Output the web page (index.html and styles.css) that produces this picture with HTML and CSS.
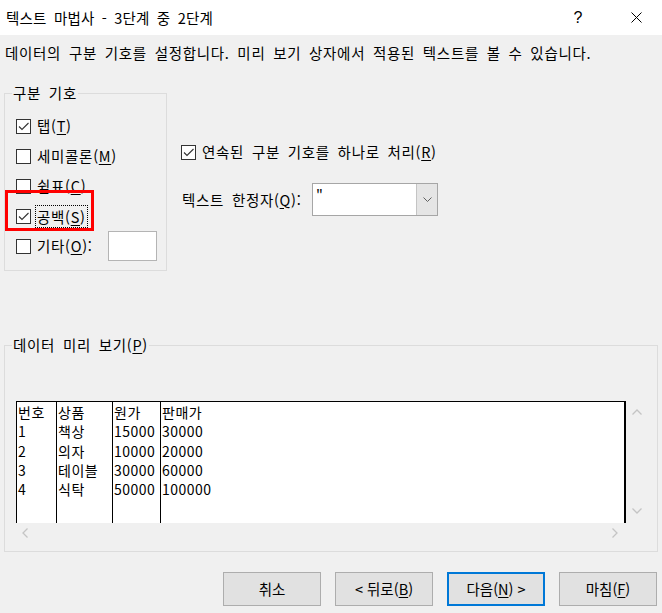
FILE: index.html
```html
<!DOCTYPE html>
<html lang="ko">
<head>
<meta charset="utf-8">
<title>텍스트 마법사 - 3단계 중 2단계</title>
<link rel="stylesheet" href="styles.css">
</head>
<body>
<div class="titlebar">
  <span class="title">텍스트 마법사 - 3단계 중 2단계</span>
  <span class="tb-btn tb-help">?</span>
  <span class="tb-btn tb-close"><svg width="11" height="11" viewBox="0 0 11 11"><path d="M0.5 0.5L10.5 10.5M10.5 0.5L0.5 10.5" stroke="#000" stroke-width="1" fill="none"/></svg></span>
</div>
<div class="content">
  <p class="intro">데이터의 구분 기호를 설정합니다. 미리 보기 상자에서 적용된 텍스트를 볼 수 있습니다.</p>
  <div class="top-row">
    <fieldset class="group delims">
      <legend>구분 기호</legend>
      <div class="check-row"><span class="cb"><svg width="13" height="13" viewBox="0 0 13 13"><path d="M2 6.5L5 9.5L11.5 3" stroke="#333" stroke-width="1.1" fill="none"/></svg></span><span>탭(<u>T</u>)</span></div>
      <div class="check-row"><span class="cb"></span><span>세미콜론(<u>M</u>)</span></div>
      <div class="check-row"><span class="cb"></span><span>쉼표(<u>C</u>)</span></div>
      <div class="check-row hl-row"><span class="cb"><svg width="13" height="13" viewBox="0 0 13 13"><path d="M2 6.5L5 9.5L11.5 3" stroke="#333" stroke-width="1.1" fill="none"/></svg></span><span class="focus">공백(<u>S</u>)</span><span class="highlight"></span></div>
      <div class="check-row"><span class="cb"></span><span>기타(<u>O</u>):</span><span class="other-box"></span></div>
    </fieldset>
    <div class="options">
      <div class="check-row"><span class="cb"><svg width="13" height="13" viewBox="0 0 13 13"><path d="M2 6.5L5 9.5L11.5 3" stroke="#333" stroke-width="1.1" fill="none"/></svg></span><span>연속된 구분 기호를 하나로 처리(<u>R</u>)</span></div>
      <div class="qual-row">
        <span class="qual-label">텍스트 한정자(<u>Q</u>):</span>
        <div class="combo">
          <span class="combo-val">"</span>
          <span class="combo-btn"><svg width="9" height="5" viewBox="0 0 9 5"><path d="M0.5 0.5L4.5 4.5L8.5 0.5" stroke="#606060" stroke-width="1" fill="none"/></svg></span>
        </div>
      </div>
    </div>
  </div>
  <fieldset class="group preview">
    <legend>데이터 미리 보기(<u>P</u>)</legend>
    <div class="preview-grid">
      <div class="pv-box">
        <div class="pv-col c1"><div>번호</div><div>1</div><div>2</div><div>3</div><div>4</div></div>
        <div class="pv-col c2"><div>상품</div><div>책상</div><div>의자</div><div>테이블</div><div>식탁</div></div>
        <div class="pv-col c3"><div>원가</div><div>15000</div><div>10000</div><div>30000</div><div>50000</div></div>
        <div class="pv-col c4"><div>판매가</div><div>30000</div><div>20000</div><div>60000</div><div>100000</div></div>
      </div>
      <div class="vscroll">
        <svg width="10" height="6" viewBox="0 0 10 6"><path d="M0.5 5.5L5 1L9.5 5.5" stroke="#c4c4c4" stroke-width="1.3" fill="none"/></svg>
        <svg width="10" height="6" viewBox="0 0 10 6"><path d="M0.5 0.5L5 5L9.5 0.5" stroke="#c4c4c4" stroke-width="1.3" fill="none"/></svg>
      </div>
      <div class="hscroll">
        <svg width="6" height="10" viewBox="0 0 6 10"><path d="M5.5 0.5L1 5L5.5 9.5" stroke="#c4c4c4" stroke-width="1.3" fill="none"/></svg>
        <svg width="6" height="10" viewBox="0 0 6 10"><path d="M0.5 0.5L5 5L0.5 9.5" stroke="#c4c4c4" stroke-width="1.3" fill="none"/></svg>
      </div>
      <div class="corner"></div>
    </div>
  </fieldset>
  <div class="buttons">
    <button class="btn">취소</button>
    <button class="btn">&lt; 뒤로(<u>B</u>)</button>
    <button class="btn default">다음(<u>N</u>) &gt;</button>
    <button class="btn">마침(<u>F</u>)</button>
  </div>
</div>
</body>
</html>
```
FILE: styles.css
```css
* { box-sizing: border-box; }
html, body { margin: 0; padding: 0; }
body {
  width: 662px;
  height: 613px;
  overflow: hidden;
  background: #f0f0f0;
  color: #000;
  font-family: "Noto Sans CJK KR", "Noto Sans", sans-serif;
  font-size: 14.5px;
  line-height: 20px;
  letter-spacing: 0.7px;
  word-spacing: 3px;
}
u { text-decoration: underline; text-underline-offset: 2px; }

.titlebar {
  height: 35px;
  background: #fff;
  display: flex;
  align-items: center;
  padding-left: 6px;
}
.title { flex: 1; letter-spacing: 0.2px; }
.tb-btn {
  height: 35px;
  display: flex;
  align-items: center;
  justify-content: center;
}
.tb-help {
  width: 64px;
  font-family: "Liberation Sans", sans-serif;
  font-size: 16px;
  letter-spacing: 0;
}
.tb-close { width: 52px; }

.content { padding: 0 4px; }
.intro { margin: 8px 0 0 1px; height: 20px; }

.top-row {
  margin-top: 20px;
  display: flex;
  align-items: flex-start;
}
.group {
  margin: 0;
  border: 1px solid #dcdcdc;
  min-width: 0;
}
.group legend {
  padding: 0 1px;
  margin-left: -4px;
  line-height: 20px;
}
.delims {
  width: 163px;
  padding: 8px 9px 9px 11px;
}
.check-row {
  display: flex;
  align-items: center;
  height: 30px;
  gap: 6px;
  position: relative;
}
.cb {
  width: 15px;
  height: 15px;
  flex: none;
  border: 1px solid #333;
  background: #fff;
  display: flex;
  align-items: center;
  justify-content: center;
}
.focus {
  border: 1px dotted #000;
  padding: 0 1px;
  margin-left: -2px;
  line-height: 21px;
}
.highlight {
  position: absolute;
  left: -11px;
  top: -11px;
  width: 89px;
  height: 41px;
  border: 3px solid #f00;
}
.other-box {
  margin-left: auto;
  width: 49px;
  height: 30px;
  background: #fff;
  border: 1px solid #b4b4b4;
}

.options {
  margin-left: 14px;
  padding-top: 54px;
}
.qual-row {
  display: flex;
  align-items: center;
  margin-top: 16px;
  height: 33px;
}
.qual-label { width: 131px; padding-left: 1px; }
.combo {
  width: 126px;
  height: 33px;
  display: flex;
  border: 1px solid #a6a6a6;
  background: #fff;
}
.combo-val { flex: 1; padding-left: 3px; line-height: 24px; }
.combo-btn {
  width: 21px;
  background: #e5e5e5;
  border-left: 1px solid #c4c4c4;
  display: flex;
  align-items: center;
  justify-content: center;
}

.group.preview {
  width: 654px;
  margin-top: 64px;
  padding: 46px 9px 8px 11px;
}
.preview-grid {
  display: grid;
  grid-template-columns: 610px 22px;
  grid-template-rows: 122px 20px;
}
.pv-box {
  background: #fff;
  border-top: 1px solid #000;
  border-right: 2px solid #000;
  display: flex;
  font-size: 14px;
  line-height: 19.3px;
  letter-spacing: 0.5px;
  word-spacing: 0;
}
.pv-col {
  border-left: 1px solid #000;
  padding: 1px 0 0 1px;
}
.c1 { width: 40px; }
.c2 { width: 56px; }
.c3 { width: 48px; }
.c4 { flex: 1; }
.vscroll {
  display: flex;
  flex-direction: column;
  align-items: center;
  justify-content: space-between;
  padding: 8px 0 9px;
}
.hscroll {
  display: flex;
  align-items: center;
  justify-content: space-between;
  padding: 0 8px 0 6px;
}

.buttons {
  margin-top: 20px;
  margin-right: 1px;
  display: flex;
  justify-content: flex-end;
  gap: 14px;
}
.btn {
  width: 98px;
  height: 34px;
  background: #e1e1e1;
  border: 1px solid #adadad;
  font: inherit;
  color: #000;
  padding: 0;
}
.btn.default { border: 2px solid #0078d7; }
```
